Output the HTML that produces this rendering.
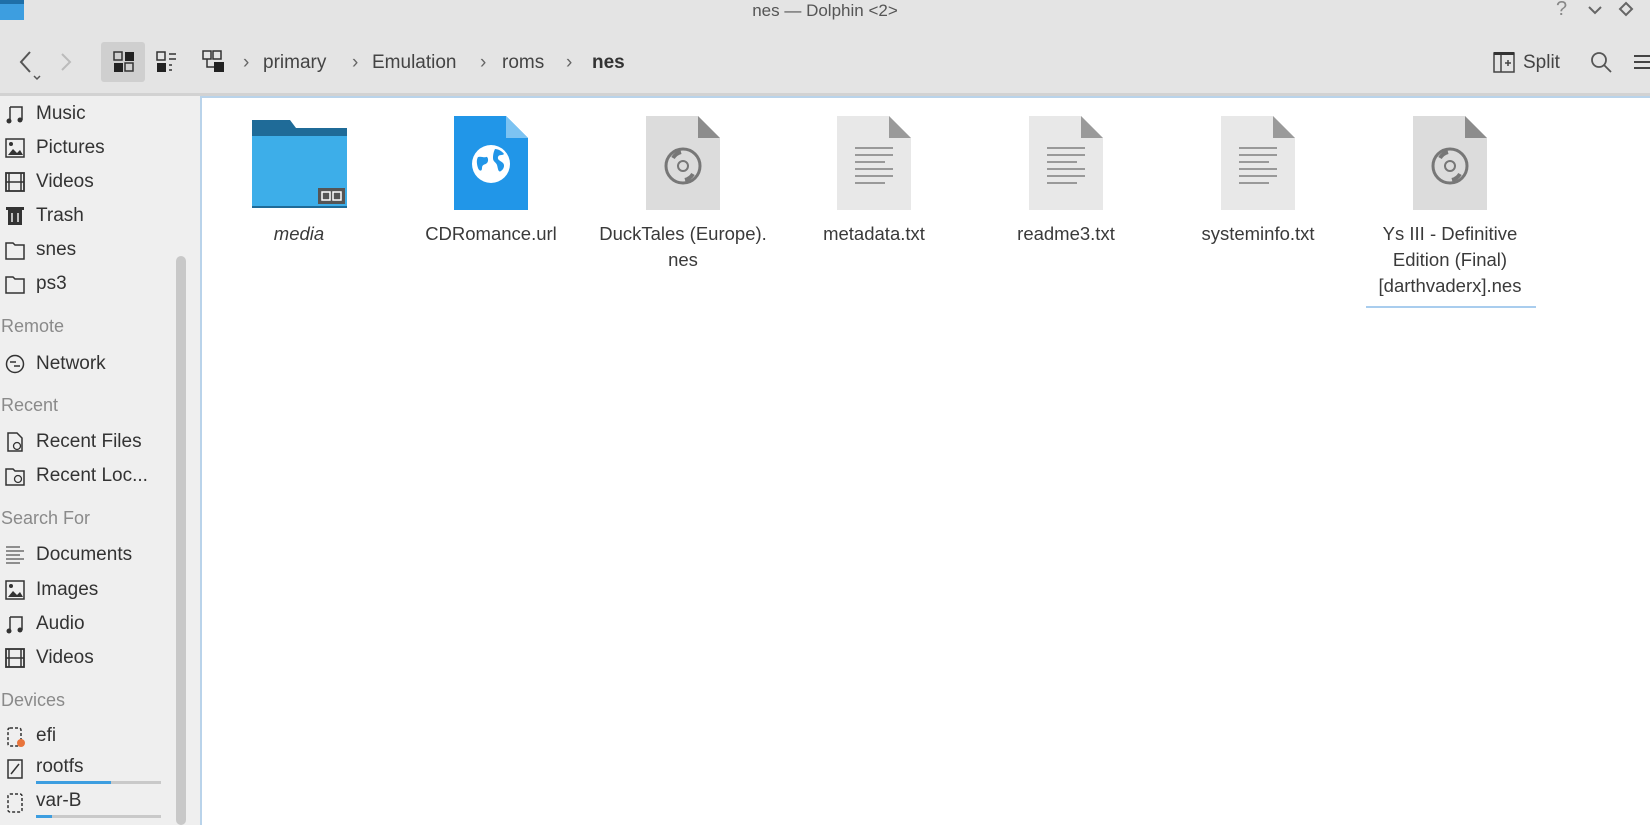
<!DOCTYPE html>
<html><head><meta charset="utf-8"><style>
*{margin:0;padding:0;box-sizing:border-box}
body{width:1650px;height:825px;overflow:hidden;background:#e4e4e4;font-family:"Liberation Sans","DejaVu Sans",sans-serif;color:#333;position:relative}
.a{position:absolute;white-space:nowrap}
.side{position:absolute;left:0;top:96px;width:200px;height:729px;background:#efefef}
.si{position:absolute;left:36px;font-size:19px;color:#333}
.sh{position:absolute;left:1px;font-size:18px;color:#8a8a8a}
.ic{position:absolute;left:5px;width:20px;height:20px}
.content{position:absolute;left:200px;top:96px;width:1450px;height:729px;background:#fff;border-top:2px solid #b9d3ea;border-left:2px solid #b9d3ea}
.lbl{position:absolute;width:190px;text-align:center;font-size:18.5px;line-height:26px;color:#3a3a3a}
.tb{font-size:19px;color:#444}
</style></head><body>
<div class="a" style="left:0;top:0;width:24px;height:20px;background:#3d9ee0;border-top:4px solid #1f6fa8"></div>
<div class="a" style="left:0;top:1px;width:1650px;text-align:center;font-size:17px;color:#555">nes — Dolphin &lt;2&gt;</div>
<div class="a" style="left:1556px;top:-2px;font-size:20px;color:#888">?</div>
<svg class="a" style="left:1587px;top:4px" width="16" height="12"><path d="M2 3l6 6 6-6" stroke="#666" stroke-width="2" fill="none"/></svg>
<svg class="a" style="left:1618px;top:1px" width="16" height="16"><path d="M8 2l6 6-6 6-6-6z" stroke="#666" stroke-width="2" fill="none"/></svg>
<svg class="a" style="left:16px;top:48px" width="60" height="36"><path d="M14 4l-9 10 9 10" stroke="#555" stroke-width="2" fill="none"/><path d="M18 28l3 3 3-3" stroke="#555" stroke-width="1.5" fill="none"/><path d="M46 6l8 8-8 8" stroke="#bbb" stroke-width="2" fill="none"/></svg>
<div class="a" style="left:101px;top:42px;width:44px;height:40px;background:#cfcfcf;border-radius:3px"></div>
<svg class="a" style="left:113px;top:51px" width="22" height="22"><rect x="1" y="1" width="8" height="8" fill="none" stroke="#333" stroke-width="1.5"/><rect x="12" y="1" width="9" height="9" fill="#222"/><rect x="1" y="12" width="9" height="9" fill="#222"/><rect x="12" y="12" width="8" height="8" fill="none" stroke="#333" stroke-width="1.5"/></svg>
<svg class="a" style="left:156px;top:51px" width="22" height="22"><rect x="1" y="1" width="8" height="8" fill="none" stroke="#333" stroke-width="1.5"/><rect x="1" y="12" width="9" height="9" fill="#222"/><path d="M13 3h7M13 8h7M13 14h3M13 19h3" stroke="#333" stroke-width="1.5"/></svg>
<svg class="a" style="left:202px;top:50px" width="24" height="24"><rect x="1" y="1" width="8" height="8" fill="none" stroke="#333" stroke-width="1.5"/><rect x="11" y="1" width="8" height="8" fill="none" stroke="#333" stroke-width="1.5"/><rect x="12" y="12" width="10" height="10" fill="#222"/><path d="M5 9v8h7" stroke="#333" stroke-width="1.5" fill="none"/></svg>
<div class="a tb" style="left:243px;top:52px;color:#666">›</div>
<div class="a tb" style="left:263px;top:52px">primary</div>
<div class="a tb" style="left:352px;top:52px;color:#666">›</div>
<div class="a tb" style="left:372px;top:52px">Emulation</div>
<div class="a tb" style="left:480px;top:52px;color:#666">›</div>
<div class="a tb" style="left:502px;top:52px">roms</div>
<div class="a tb" style="left:566px;top:52px;color:#666">›</div>
<div class="a tb" style="left:592px;top:52px;font-weight:bold;color:#333">nes</div>
<svg class="a" style="left:1493px;top:51px" width="22" height="22"><rect x="1" y="2" width="20" height="19" fill="none" stroke="#444" stroke-width="1.5"/><rect x="1" y="1" width="20" height="3" fill="#333"/><path d="M8 4v17M12 12h6M15 9v6" stroke="#444" stroke-width="1.5"/></svg>
<div class="a tb" style="left:1523px;top:52px">Split</div>
<svg class="a" style="left:1590px;top:51px" width="24" height="24"><circle cx="9" cy="9" r="7" fill="none" stroke="#555" stroke-width="1.8"/><path d="M14 14l7 7" stroke="#555" stroke-width="1.8"/></svg>
<svg class="a" style="left:1634px;top:54px" width="16" height="18"><path d="M0 2h16M0 8h16M0 14h16" stroke="#444" stroke-width="2"/></svg>
<div class="a" style="left:0;top:93px;width:1650px;height:3px;background:#d2d2d2"></div>
<div class="side"></div>
<div class="a" style="left:176px;top:256px;width:10px;height:569px;background:#c8c8c8;border-radius:5px"></div>
<svg class="ic" style="top:104px"><path d="M5 3h12v13M5 3v14" stroke="#333" stroke-width="1.5" fill="none"/><circle cx="4" cy="17" r="2.5" fill="#333"/><circle cx="15" cy="16" r="2.5" fill="#333"/></svg>
<div class="si" style="top:103px">Music</div>
<svg class="ic" style="top:138px"><rect x="1" y="1" width="18" height="18" fill="none" stroke="#333" stroke-width="1.5"/><path d="M3 17l5-6 4 4 3-3 3 5z" fill="#333"/><circle cx="6" cy="6" r="2" fill="#333"/></svg>
<div class="si" style="top:137px">Pictures</div>
<svg class="ic" style="top:172px"><rect x="1" y="1" width="18" height="18" fill="none" stroke="#333" stroke-width="1.8"/><path d="M1 10h18M4 1v18M16 1v18" stroke="#333" stroke-width="1.5"/></svg>
<div class="si" style="top:171px">Videos</div>
<svg class="ic" style="top:206px"><rect x="3" y="4" width="14" height="15" fill="#333"/><rect x="1" y="1" width="18" height="3" fill="#333"/><path d="M7 7v9M13 7v9" stroke="#eee" stroke-width="1.5"/></svg>
<div class="si" style="top:205px">Trash</div>
<svg class="ic" style="top:240px"><path d="M1 3h7l2 2h9v14H1z" fill="none" stroke="#333" stroke-width="1.5"/></svg>
<div class="si" style="top:239px">snes</div>
<svg class="ic" style="top:274px"><path d="M1 3h7l2 2h9v14H1z" fill="none" stroke="#333" stroke-width="1.5"/></svg>
<div class="si" style="top:273px">ps3</div>
<div class="sh" style="top:316px">Remote</div>
<svg class="ic" style="top:354px"><circle cx="10" cy="10" r="8.5" fill="none" stroke="#333" stroke-width="1.5"/><path d="M5 8h6M9 12h6" stroke="#333" stroke-width="1.5"/></svg>
<div class="si" style="top:353px">Network</div>
<div class="sh" style="top:395px">Recent</div>
<svg class="ic" style="top:432px"><path d="M3 1h9l5 5v13H3z" fill="none" stroke="#333" stroke-width="1.5"/><circle cx="12" cy="14" r="3.5" fill="none" stroke="#333" stroke-width="1.3"/></svg>
<div class="si" style="top:431px">Recent Files</div>
<svg class="ic" style="top:466px"><path d="M1 3h7l2 2h9v14H1z" fill="none" stroke="#333" stroke-width="1.5"/><circle cx="13" cy="13" r="3.5" fill="none" stroke="#333" stroke-width="1.3"/></svg>
<div class="si" style="top:465px">Recent Loc...</div>
<div class="sh" style="top:508px">Search For</div>
<svg class="ic" style="top:545px"><path d="M1 2h14M1 6h18M1 10h14M1 14h18M1 18h14" stroke="#555" stroke-width="1.3"/></svg>
<div class="si" style="top:544px">Documents</div>
<svg class="ic" style="top:580px"><rect x="1" y="1" width="18" height="18" fill="none" stroke="#333" stroke-width="1.5"/><path d="M3 17l5-6 4 4 3-3 3 5z" fill="#333"/><circle cx="6" cy="6" r="2" fill="#333"/></svg>
<div class="si" style="top:579px">Images</div>
<svg class="ic" style="top:614px"><path d="M5 3h12v13M5 3v14" stroke="#333" stroke-width="1.5" fill="none"/><circle cx="4" cy="17" r="2.5" fill="#333"/><circle cx="15" cy="16" r="2.5" fill="#333"/></svg>
<div class="si" style="top:613px">Audio</div>
<svg class="ic" style="top:648px"><rect x="1" y="1" width="18" height="18" fill="none" stroke="#333" stroke-width="1.8"/><path d="M1 10h18M4 1v18M16 1v18" stroke="#333" stroke-width="1.5"/></svg>
<div class="si" style="top:647px">Videos</div>
<div class="sh" style="top:690px">Devices</div>
<svg class="ic" style="top:727px"><rect x="3" y="1" width="13" height="18" rx="2" fill="none" stroke="#333" stroke-width="1.5" stroke-dasharray="3 2"/><circle cx="16" cy="16" r="4" fill="#e8743b"/></svg>
<div class="si" style="top:725px">efi</div>
<svg class="ic" style="top:759px"><rect x="3" y="1" width="14" height="18" fill="none" stroke="#333" stroke-width="1.5"/><path d="M6 15l8-10" stroke="#333" stroke-width="1.5"/></svg>
<div class="si" style="top:756px">rootfs</div>
<div class="a" style="left:36px;top:781px;width:125px;height:3px;background:#c9c9c9"></div>
<div class="a" style="left:36px;top:781px;width:75px;height:3px;background:#3d9ee0"></div>
<svg class="ic" style="top:793px"><rect x="3" y="1" width="14" height="18" rx="2" fill="none" stroke="#333" stroke-width="1.5" stroke-dasharray="3 2"/></svg>
<div class="si" style="top:790px">var-B</div>
<div class="a" style="left:36px;top:815px;width:125px;height:3px;background:#c9c9c9"></div>
<div class="a" style="left:36px;top:815px;width:16px;height:3px;background:#3d9ee0"></div>
<div class="content"></div>
<svg class="a" style="left:252px;top:120px" width="96" height="88"><path d="M0 0h38l6 8h51v84H0z" fill="#1f6b98"/><rect x="0" y="16" width="95" height="70" fill="#3daee9"/><rect x="66" y="68" width="27" height="16" fill="#555"/><rect x="70" y="72" width="8" height="8" fill="none" stroke="#fff" stroke-width="1.5"/><rect x="81" y="72" width="8" height="8" fill="none" stroke="#fff" stroke-width="1.5"/></svg>
<div class="lbl" style="left:204px;top:221px;font-style:italic">media</div>
<svg class="a" style="left:454px;top:116px" width="76" height="96"><path d="M0 0h52l22 22v72H0z" fill="#2196e8"/><path d="M52 0v22h22z" fill="#7cc3f2"/><circle cx="37" cy="48" r="19" fill="#fff"/><path d="M24 41c3-1 6 1 8 0s3 4 1 6-5 1-5 5-3 3-4 0-2-8 0-11z" fill="#2196e8"/><path d="M41 33c3 0 7 2 9 5-2 2-5 0-6 3s3 4 5 6 1 6-2 8-3-3-4-6-4-3-4-7 1-7 2-9z" fill="#2196e8"/></svg>
<div class="lbl" style="left:396px;top:221px">CDRomance.url</div>
<svg class="a" style="left:646px;top:116px" width="76" height="96"><path d="M0 0h52l22 22v72H0z" fill="#dcdcdc"/><path d="M52 0v22h22z" fill="#8c8c8c"/><circle cx="37" cy="50" r="17" fill="none" stroke="#777" stroke-width="3"/><circle cx="37" cy="50" r="5" fill="none" stroke="#777" stroke-width="2"/><path d="M27 42a13 13 0 0 1 8-6M47 58a13 13 0 0 1-8 6" stroke="#777" stroke-width="4" fill="none"/></svg>
<div class="lbl" style="left:588px;top:221px">DuckTales (Europe).<br>nes</div>
<svg class="a" style="left:837px;top:116px" width="76" height="96"><path d="M0 0h52l22 22v72H0z" fill="#e8e8e8"/><path d="M52 0v22h22z" fill="#9a9a9a"/><path d="M18 32h38M18 39h38M18 46h30M18 53h38M18 60h38M18 67h30" stroke="#999" stroke-width="2"/></svg>
<div class="lbl" style="left:779px;top:221px">metadata.txt</div>
<svg class="a" style="left:1029px;top:116px" width="76" height="96"><path d="M0 0h52l22 22v72H0z" fill="#e8e8e8"/><path d="M52 0v22h22z" fill="#9a9a9a"/><path d="M18 32h38M18 39h38M18 46h30M18 53h38M18 60h38M18 67h30" stroke="#999" stroke-width="2"/></svg>
<div class="lbl" style="left:971px;top:221px">readme3.txt</div>
<svg class="a" style="left:1221px;top:116px" width="76" height="96"><path d="M0 0h52l22 22v72H0z" fill="#e8e8e8"/><path d="M52 0v22h22z" fill="#9a9a9a"/><path d="M18 32h38M18 39h38M18 46h30M18 53h38M18 60h38M18 67h30" stroke="#999" stroke-width="2"/></svg>
<div class="lbl" style="left:1163px;top:221px">systeminfo.txt</div>
<svg class="a" style="left:1413px;top:116px" width="76" height="96"><path d="M0 0h52l22 22v72H0z" fill="#dcdcdc"/><path d="M52 0v22h22z" fill="#8c8c8c"/><circle cx="37" cy="50" r="17" fill="none" stroke="#777" stroke-width="3"/><circle cx="37" cy="50" r="5" fill="none" stroke="#777" stroke-width="2"/><path d="M27 42a13 13 0 0 1 8-6M47 58a13 13 0 0 1-8 6" stroke="#777" stroke-width="4" fill="none"/></svg>
<div class="lbl" style="left:1355px;top:221px">Ys III - Definitive<br>Edition (Final)<br>[darthvaderx].nes</div>
<div class="a" style="left:1366px;top:306px;width:170px;height:2px;background:#a9cdee"></div>
</body></html>
